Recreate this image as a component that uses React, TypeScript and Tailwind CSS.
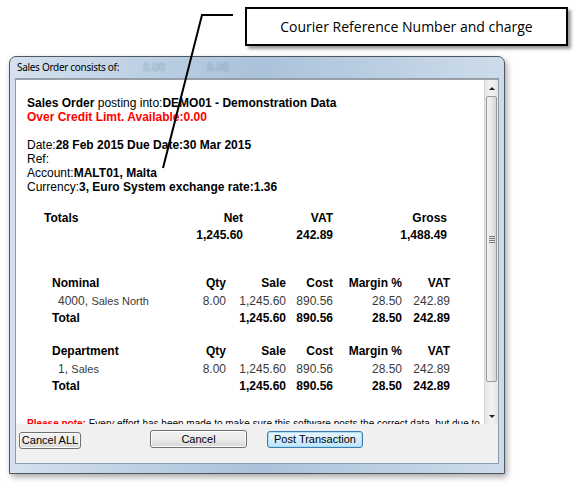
import React from "react";

const nominalRows = [
  { label: "4000,", sub: "Sales North", qty: "8.00", sale: "1,245.60", cost: "890.56", margin: "28.50", vat: "242.89" },
];

const departmentRows = [
  { label: "1,", sub: "Sales", qty: "8.00", sale: "1,245.60", cost: "890.56", margin: "28.50", vat: "242.89" },
];

const cols = "grid grid-cols-[134px_40px_60px_47px_69px_48px]";

type Row = (typeof nominalRows)[number];

const Breakdown = ({ title, rows }: { title: string; rows: Row[] }) => (
  <div className="ml-[25px]">
    <div className={`${cols} h-[18px] items-center font-bold text-black`}>
      <span>{title}</span>
      <span className="text-right">Qty</span>
      <span className="text-right">Sale</span>
      <span className="text-right">Cost</span>
      <span className="text-right">Margin %</span>
      <span className="text-right">VAT</span>
    </div>
    {rows.map((r) => (
      <div key={r.label} className={`${cols} h-[17px] items-center text-[#3a3a3a]`}>
        <span className="pl-[6px]">
          {r.label} <span className="text-[11px]">{r.sub}</span>
        </span>
        <span className="text-right">{r.qty}</span>
        <span className="text-right">{r.sale}</span>
        <span className="text-right">{r.cost}</span>
        <span className="text-right">{r.margin}</span>
        <span className="text-right">{r.vat}</span>
      </div>
    ))}
    <div className={`${cols} h-[17px] items-center font-bold text-black`}>
      <span>Total</span>
      <span />
      <span className="text-right">1,245.60</span>
      <span className="text-right">890.56</span>
      <span className="text-right">28.50</span>
      <span className="text-right">242.89</span>
    </div>
  </div>
);

const Button = ({ label, primary, className }: { label: string; primary?: boolean; className: string }) => (
  <button
    className={
      "flex items-center justify-center rounded-[3px] border text-[11px] leading-none text-black " +
      (primary
        ? "border-[#3c7fb1] bg-gradient-to-b from-[#eaf6fd] to-[#bee6fd] shadow-[inset_0_0_0_1px_#a8dcf7] "
        : "border-[#707070] bg-gradient-to-b from-[#f2f2f2] via-[#ebebeb] to-[#d8d8d8] shadow-[inset_0_0_0_1px_#fcfcfc] ") +
      className
    }
  >
    {label}
  </button>
);

const ScrollBar = () => (
  <div className="flex w-[14px] flex-col border-l border-[#d6d6d6] bg-gradient-to-r from-[#e6e6e6] via-[#f2f2f2] to-[#e6e6e6]">
    <div className="flex h-[16px] items-center justify-center">
      <div className="h-0 w-0 border-x-[3px] border-b-[3px] border-x-transparent border-b-[#222]" />
    </div>
    <div className="mx-[1px] flex h-[286px] items-center justify-center rounded-[2px] border border-[#9b9b9b] bg-gradient-to-r from-[#f3f3f3] via-[#e8e8e8] to-[#d4d4d4]">
      <div className="flex w-[6px] flex-col gap-[1px]">
        <div className="h-px bg-[#7a7a7a]" />
        <div className="h-px bg-[#7a7a7a]" />
        <div className="h-px bg-[#7a7a7a]" />
        <div className="h-px bg-[#7a7a7a]" />
      </div>
    </div>
    <div className="flex-1" />
    <div className="flex h-[16px] items-center justify-center">
      <div className="h-0 w-0 border-x-[3px] border-t-[3px] border-x-transparent border-t-[#222]" />
    </div>
  </div>
);

export default function App() {
  return (
    <div className="relative h-[489px] w-[580px] overflow-hidden bg-white pt-[7px] font-['Liberation_Sans',Arial,sans-serif]">
      {/* callout label */}
      <div className="ml-[245px] flex h-[39px] w-[323px] items-center justify-center border-2 border-black bg-white shadow-[3px_3px_3px_rgba(0,0,0,0.4)]">
        <span className="font-['Open_Sans',sans-serif] text-[14px] text-black">
          Courier Reference Number and charge
        </span>
      </div>

      {/* dialog window */}
      <div className="ml-[9px] mt-[10px] flex h-[418px] w-[496px] flex-col rounded-t-[7px] border border-[#4e5660] bg-gradient-to-r from-[#d4e1ee] via-[#aac2da] to-[#cddcea] px-[5px] pb-[9px] shadow-[2px_3px_6px_rgba(0,0,0,0.35)]">
        <div className="relative flex h-[21px] items-center pl-[2px] font-['Noto_Sans',sans-serif] text-[10px] text-black">
          <span className="tracking-[-0.3px]">Sales Order consists of:</span>
          <span className="ml-[24px] text-[11px] text-[#6f86a0] opacity-60 blur-[1px]">0.00</span>
          <span className="ml-[42px] text-[11px] text-[#6f86a0] opacity-60 blur-[1px]">0.00</span>
        </div>

        <div className="flex flex-1 flex-col border border-[#8b9db2] bg-[#f0f0f0]">
          <div className="flex h-[345px] border-t border-[#a0a0a0] bg-white">
            <div className="flex-1 overflow-hidden pl-[11px] pt-[16px] text-[12px] leading-[14px] text-black">
              <div>
                <b>Sales Order</b> posting into:<b>DEMO01 - Demonstration Data</b>
              </div>
              <div className="font-bold text-[#ff0000]">Over Credit Limt. Available:0.00</div>
              <div className="h-[14px]" />
              <div>
                Date:<b>28 Feb 2015 Due Date:30 Mar 2015</b>
              </div>
              <div>Ref:</div>
              <div>
                Account:<b>MALT01, Malta</b>
              </div>
              <div>
                Currency:<b>3, Euro System exchange rate:1.36</b>
              </div>

              <div className="ml-[17px] mt-[16px] grid grid-cols-[99px_100px_90px_114px] font-bold">
                <span className="h-[17px] leading-[17px]">Totals</span>
                <span className="text-right leading-[17px]">Net</span>
                <span className="text-right leading-[17px]">VAT</span>
                <span className="text-right leading-[17px]">Gross</span>
                <span />
                <span className="text-right leading-[17px]">1,245.60</span>
                <span className="text-right leading-[17px]">242.89</span>
                <span className="text-right leading-[17px]">1,488.49</span>
              </div>

              <div className="mt-[30px]">
                <Breakdown title="Nominal" rows={nominalRows} />
              </div>
              <div className="mt-[16px]">
                <Breakdown title="Department" rows={departmentRows} />
              </div>

              <div className="mt-[24px] whitespace-nowrap text-[10px] leading-[12px]">
                <b className="text-[#ff0000]">Please note:</b> Every effort has been made to make sure this software posts the correct data, but due to
              </div>
            </div>
            <ScrollBar />
          </div>

          <div className="flex flex-1 items-start">
            <Button label="Cancel ALL" className="ml-[3px] mt-[8px] h-[17px] w-[62px]" />
            <Button label="Cancel" className="ml-[69px] mt-[6px] h-[18px] w-[97px]" />
            <Button label="Post Transaction" primary className="ml-[20px] mt-[7px] h-[17px] w-[96px]" />
          </div>
        </div>
      </div>

      {/* pointer from the callout */}
      <svg className="pointer-events-none absolute left-0 top-0" width="580" height="489">
        <polyline points="233,15 202,15 163,168" fill="none" stroke="#000" strokeWidth="2" />
      </svg>
    </div>
  );
}
